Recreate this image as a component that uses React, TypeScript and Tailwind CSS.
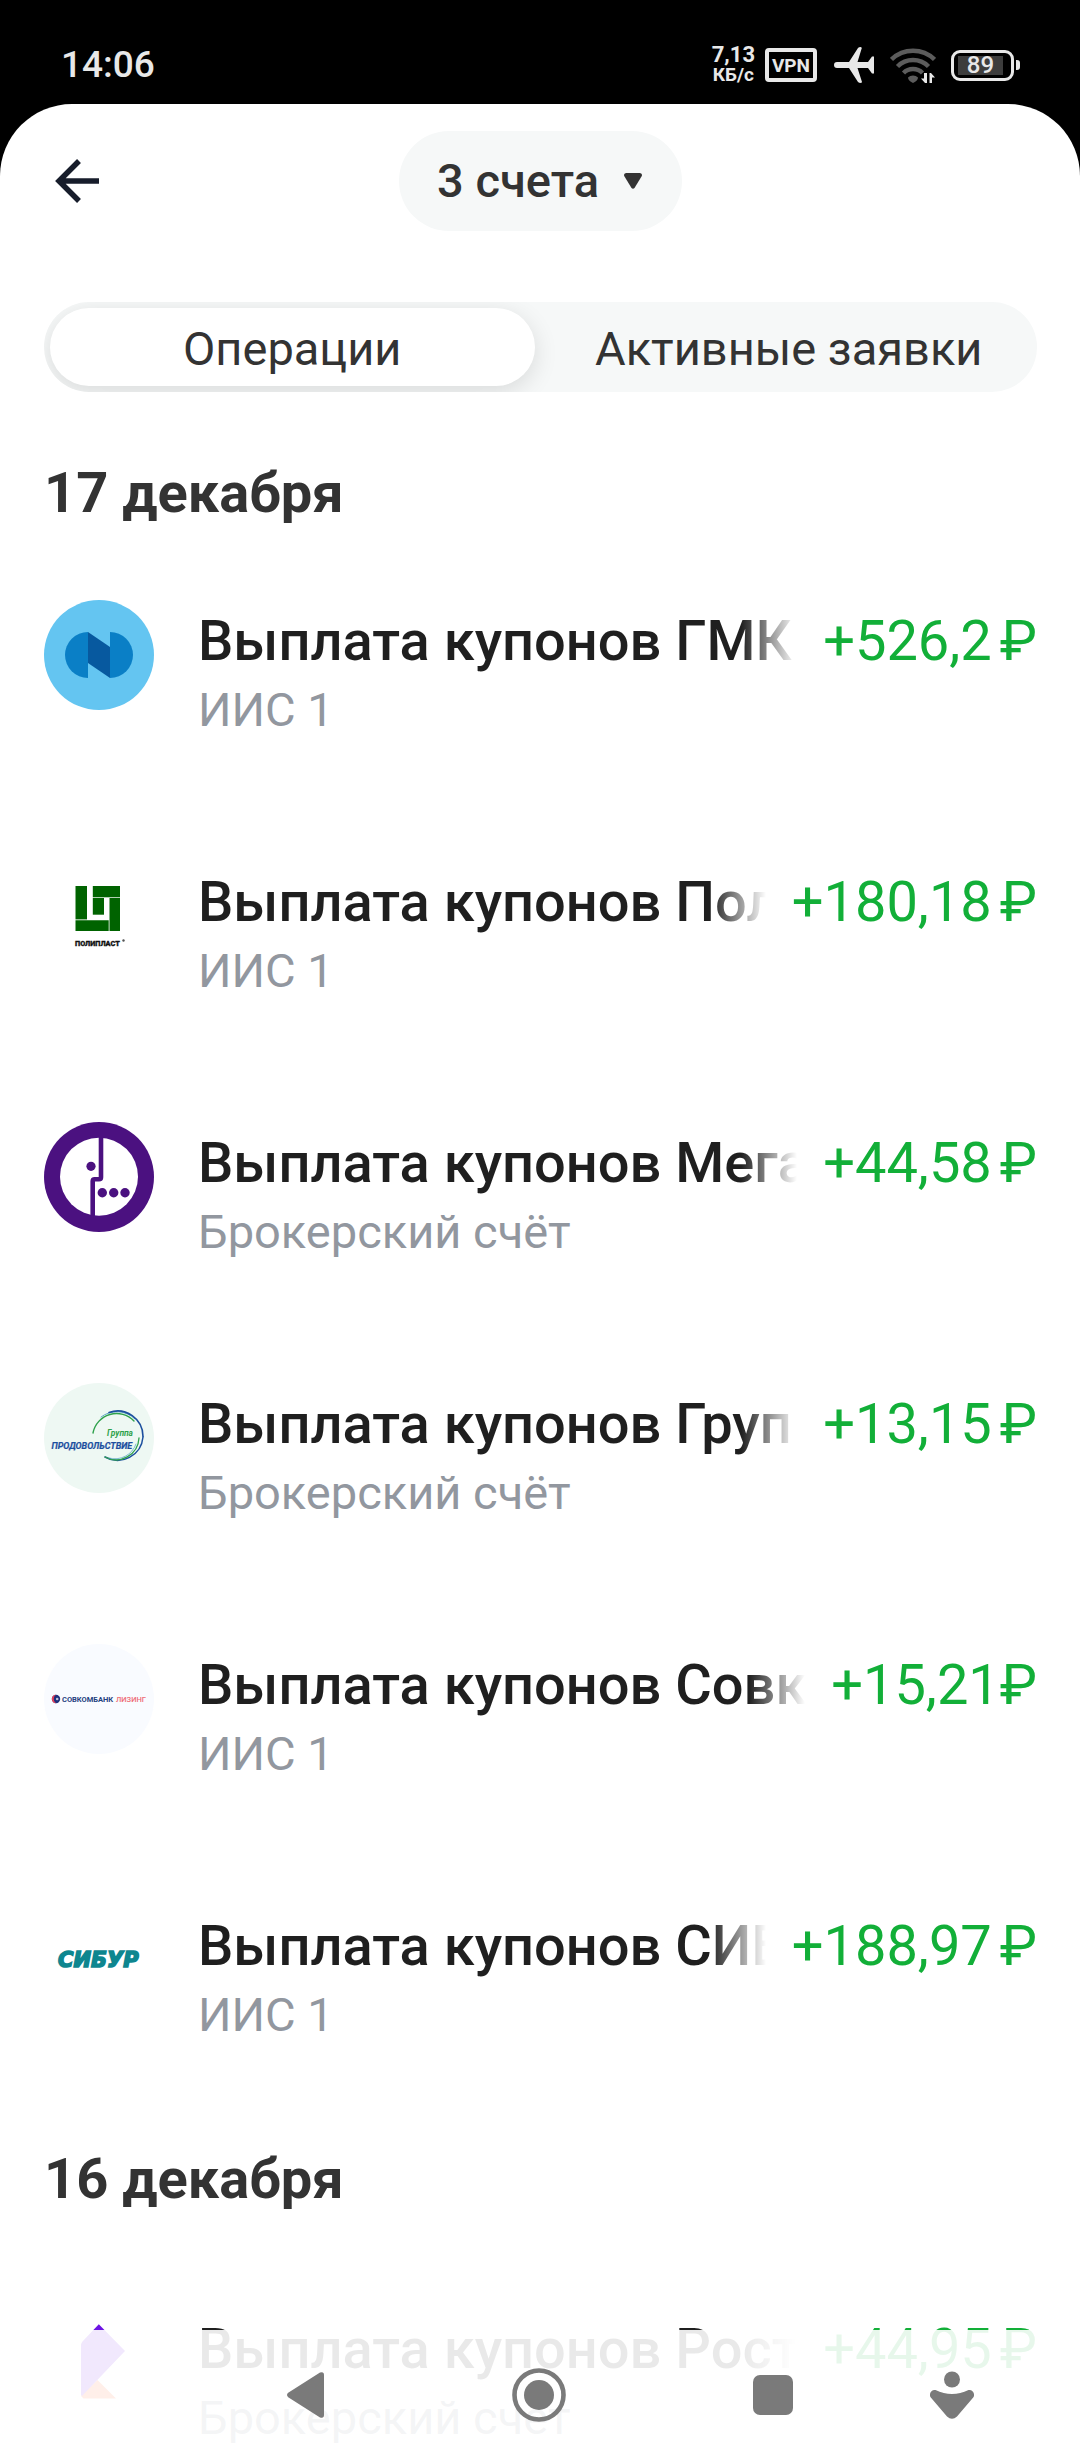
import { useState } from "react";
import type { ReactNode } from "react";

interface Operation {
  id: string;
  title: string;
  account: string;
  amount: string;
  currencyClass?: string;
  logo: ReactNode;
}

interface OperationGroup {
  date: string;
  headerClass: string;
  operations: Operation[];
}

function NornickelLogo() {
  return (
    <svg className="size-[110px] shrink-0" viewBox="0 0 110 110" aria-hidden>
      <circle cx="55" cy="55" r="55" fill="#64c5f1" />
      <path d="M44 32a23 23 0 0 0 0 46z" fill="#0a7fc6" />
      <path d="M66 32a23 23 0 0 1 0 46z" fill="#0a7fc6" />
      <path d="M44 32l22 15v31l-22-15z" fill="#07599f" />
    </svg>
  );
}

function PoliplastLogo() {
  return (
    <svg className="size-[110px] shrink-0" viewBox="0 0 110 110" aria-hidden>
      <g fill="#006300">
        <path d="M31.5 25H43v33.4H31.5z" />
        <path d="M31.5 59.2h33.2V70H31.5z" />
        <path d="M65.5 37H76v33H65.5z" />
        <path d="M48.8 25H76v11.3H48.8z" />
        <path d="M48.8 37H60v16.7H48.8z" />
      </g>
      <text
        x="31"
        y="84.5"
        fontSize="7.3"
        fontWeight="900"
        fill="#111"
        stroke="#111"
        strokeWidth="0.3"
        fontFamily="Roboto, sans-serif"
      >
        ПОЛИПЛАСТ
      </text>
      <circle cx="79.5" cy="79.5" r="1.2" fill="#555" />
    </svg>
  );
}

function MegafonLogo() {
  return (
    <svg className="size-[110px] shrink-0" viewBox="0 0 110 110" aria-hidden>
      <circle cx="55" cy="55" r="55" fill="#4b1180" />
      <circle cx="55" cy="54.7" r="39" fill="#fff" />
      <path
        d="M57 14v41.3q0 2-2 2h-4.3q-2 0-2 2V95"
        fill="none"
        stroke="#4b1180"
        strokeWidth="4.6"
      />
      <g fill="#4b1180">
        <circle cx="47" cy="44.3" r="4.6" />
        <circle cx="58.3" cy="70.7" r="4.7" />
        <circle cx="69.7" cy="70.7" r="4.7" />
        <circle cx="81" cy="70.7" r="4.7" />
      </g>
    </svg>
  );
}

function ProdovolstvieLogo() {
  return (
    <svg className="size-[110px] shrink-0" viewBox="0 0 110 110" aria-hidden>
      <circle cx="55" cy="55" r="55" fill="#eef8f3" />
      <g fill="none" strokeLinecap="round">
        <path d="M49 50a24 24 0 0 1 41-12" stroke="#2fa24c" strokeWidth="1.4" />
        <path d="M57 34a26 26 0 0 1 34 2" stroke="#4f9fc0" strokeWidth="0.9" />
        <path d="M65 29.5a25.5 25.5 0 0 1 34 24" stroke="#1c4f9e" strokeWidth="1.6" />
        <path d="M99 54a25.5 25.5 0 0 1-38 20" stroke="#1c4f9e" strokeWidth="1.5" />
        <path d="M95 55a23 23 0 0 1-34 19" stroke="#2fa24c" strokeWidth="1.3" />
        <path d="M92 61a22 22 0 0 1-27 14" stroke="#4f9fc0" strokeWidth="0.7" />
      </g>
      <g fontFamily="Roboto, sans-serif" fontWeight="700" fontStyle="italic">
        <text x="63" y="53" fontSize="8.4" fill="#2fa24c">
          Группа
        </text>
        <text x="7.5" y="65.5" fontSize="9" fill="#1c4f9e" stroke="#1c4f9e" strokeWidth="0.2">
          ПРОДОВОЛЬСТВИЕ
        </text>
      </g>
    </svg>
  );
}

function SovcombankLogo() {
  return (
    <svg className="size-[110px] shrink-0" viewBox="0 0 110 110" aria-hidden>
      <circle cx="55" cy="55" r="55" fill="#f9fbff" />
      <circle cx="12" cy="55" r="4.2" fill="#1d2f7c" />
      <path d="M12 50.8a4.2 4.2 0 0 0 0 8.4a5 5 0 0 1 0-8.4z" fill="#e4405a" />
      <circle cx="13.2" cy="55" r="1.3" fill="#fff" opacity="0.7" />
      <g fontFamily="Roboto, sans-serif" fontSize="7.5">
        <text x="18" y="57.7" fontWeight="700" fill="#24417f">
          СОВКОМБАНК
        </text>
        <text x="72" y="57.7" fontWeight="500" fill="#ee6a74">
          ЛИЗИНГ
        </text>
      </g>
    </svg>
  );
}

function SiburLogo() {
  return (
    <svg className="size-[110px] shrink-0" viewBox="0 0 110 110" aria-hidden>
      <text
        x="14"
        y="62"
        fontSize="21"
        fontWeight="700"
        fontStyle="italic"
        fill="#0e868f"
        stroke="#0e868f"
        strokeWidth="1.6"
        fontFamily="'DejaVu Sans', sans-serif"
      >
        СИБУР
      </text>
    </svg>
  );
}

function RostelecomLogo() {
  return (
    <svg className="size-[110px] shrink-0" viewBox="0 0 110 110" aria-hidden>
      <path d="M53.5 72L72 90.5H39.5L37 88z" fill="#ff5a1f" />
      <path d="M54.8 16.3L81 43 38 88l-1-1V37q0-2 1.5-3.5z" fill="#6d14e4" />
    </svg>
  );
}

const GROUPS: OperationGroup[] = [
  {
    date: "17 декабря",
    headerClass: "h-[98px]",
    operations: [
      { id: "gmk", title: "Выплата купонов ГМК", account: "ИИС 1", amount: "+526,2", logo: <NornickelLogo /> },
      { id: "pol", title: "Выплата купонов Пол", account: "ИИС 1", amount: "+180,18", logo: <PoliplastLogo /> },
      { id: "mega", title: "Выплата купонов Мега", account: "Брокерский счёт", amount: "+44,58", logo: <MegafonLogo /> },
      { id: "grup", title: "Выплата купонов Груп", account: "Брокерский счёт", amount: "+13,15", logo: <ProdovolstvieLogo /> },
      {
        id: "sovk",
        title: "Выплата купонов Совк",
        account: "ИИС 1",
        amount: "+15,21",
        currencyClass: "ml-0",
        logo: <SovcombankLogo />,
      },
      { id: "sib", title: "Выплата купонов СИБ", account: "ИИС 1", amount: "+188,97", logo: <SiburLogo /> },
    ],
  },
  {
    date: "16 декабря",
    headerClass: "h-[142px]",
    operations: [
      { id: "rost", title: "Выплата купонов Рост", account: "Брокерский счёт", amount: "+44,95", logo: <RostelecomLogo /> },
    ],
  },
];

const TABS = ["Операции", "Активные заявки"];

function StatusBar() {
  return (
    <div className="flex h-[104px] shrink-0 items-center justify-between pt-[26px] pr-[60px] pl-[61px] text-[#e8e8e8]">
      <span className="text-[37px] leading-[44px] font-medium">14:06</span>
      <div className="flex items-center">
        <div className="flex flex-col text-center font-bold">
          <span className="text-[22px] leading-[20px]">7,13</span>
          <span className="text-[19px] leading-[20px]">КБ/с</span>
        </div>
        <span className="ml-[10px] flex h-[34px] w-[52px] items-center justify-center rounded-[4px] border-4 border-[#e8e8e8] text-[19px] leading-none font-bold">
          VPN
        </span>
        <svg className="ml-[17px] h-9 w-10" viewBox="0 0 40 36" fill="currentColor" aria-hidden>
          <path d="M3 15h12L24 1q.6-1 3-1l.8 1L23.5 15H34l4-5.5h2v17h-2L34 21H23.5l4.500 14-.8 1q-2.500 0-3.200-1L15 21H3a3 3 0 0 1 0-6z" />
        </svg>
        <svg className="ml-4 h-9 w-[46px]" viewBox="0 0 46 36" fill="none" aria-hidden>
          <g stroke="#5c5c5c" strokeWidth="4.5">
            <path d="M1.5 12.5a31 31 0 0 1 43 0" />
            <path d="M7.5 19.5a22 22 0 0 1 31 0" />
            <path d="M13.5 26a13.5 13.5 0 0 1 19 0" />
          </g>
          <path d="M18 30.5a7 7 0 0 1 10 0q0 3-5 5.5q-5-2.500-5-5.500z" fill="#5c5c5c" />
          <path d="M37 26v10h-2l-4-4.500h3V26zM39.500 36V26h1.500l4 4.500h-3V36z" fill="#e8e8e8" />
        </svg>
        <div className="ml-[15px] flex items-center gap-[2px]">
          <div className="flex h-[31px] w-[63px] rounded-[9px] border-[3px] border-[#e8e8e8] px-1 py-[3px]">
            <span className="flex w-[45px] items-center justify-center bg-[#3d3d3d] text-[24px] leading-none font-medium">
              89
            </span>
          </div>
          <span className="h-[10px] w-1 rounded-r-[3px] bg-[#e8e8e8]" />
        </div>
      </div>
    </div>
  );
}

function OperationRow({ operation }: { operation: Operation }) {
  return (
    <li className="flex h-[261px] items-start pt-[59px]">
      {operation.logo}
      <div className="mt-1.5 ml-11 min-w-0 flex-1">
        <div className="flex items-center gap-[26px]">
          <h3 className="min-w-0 flex-1 overflow-hidden text-[56px] leading-[70px] font-medium whitespace-nowrap text-[#1f1f1f] [mask-image:linear-gradient(to_right,#000_calc(100%-56px),transparent)]">
            {operation.title}
          </h3>
          <span className="shrink-0 text-[56px] leading-[70px] text-[#12af38]">
            {operation.amount}
            <span className={operation.currencyClass ?? "ml-2"}>₽</span>
          </span>
        </div>
        <p className="text-[47px] leading-[68px] text-[#92979f]">{operation.account}</p>
      </div>
    </li>
  );
}

function NavigationBar() {
  return (
    <nav
      aria-label="Системная навигация"
      className="absolute inset-x-0 bottom-0 grid h-[130px] grid-cols-[234fr_234fr_234fr_124fr] items-center bg-white/90 pr-[66px] pl-[188px] text-[#7a7a7a]"
    >
      <button type="button" aria-label="Назад" className="flex justify-center">
        <svg className="h-[46px] w-[37px]" viewBox="0 0 37 46" fill="currentColor" aria-hidden>
          <path d="M1.2 20.8L33 .6q4-1.4 4 2.4v40q0 3.8-4 2.4L1.2 25.2q-2.4-2.2 0-4.4z" />
        </svg>
      </button>
      <button type="button" aria-label="Домой" className="flex justify-center">
        <svg className="size-[54px]" viewBox="0 0 54 54" aria-hidden>
          <circle cx="27" cy="27" r="24.5" fill="none" stroke="currentColor" strokeWidth="4.6" />
          <circle cx="27" cy="27" r="15" fill="currentColor" />
        </svg>
      </button>
      <button type="button" aria-label="Недавние" className="flex justify-center">
        <span className="size-10 rounded-[7px] bg-current" />
      </button>
      <button type="button" aria-label="Специальные возможности" className="flex justify-center">
        <svg className="h-[48px] w-[44px]" viewBox="0 0 44 48" fill="currentColor" aria-hidden>
          <circle cx="22" cy="8.5" r="8" />
          <path d="M5.5 19Q22 27 38.5 19c4.5-.8 7 4.5 4.7 7.5L27 45.500q-5 4.500-10 0L.8 26.500C-1.500 23.500 1 18.200 5.500 19z" />
        </svg>
      </button>
    </nav>
  );
}

export default function App() {
  const [activeTab, setActiveTab] = useState(TABS[0]);

  return (
    <div className="relative flex h-screen flex-col overflow-hidden bg-black font-['Roboto',sans-serif]">
      <StatusBar />
      <main className="min-h-0 flex-1 overflow-y-auto rounded-t-[72px] bg-white pr-[43px] pl-11 [scrollbar-width:none]">
        <header className="grid grid-cols-[1fr_auto_1fr] items-center pt-[27px]">
          <button type="button" aria-label="Назад" className="ml-[11px] w-11">
            <svg className="size-11" viewBox="0 0 44 44" fill="none" stroke="#171d2b" strokeWidth="5.5" aria-hidden>
              <path d="M44 22H5M24 2L4 22l20 20" />
            </svg>
          </button>
          <button
            type="button"
            className="flex h-[100px] items-center gap-[25px] rounded-full bg-[#f6f8f8] pr-10 pl-[38px] text-[47px] leading-[56px] font-medium text-[#333]"
          >
            3 счета
            <svg className="h-4 w-[18px]" viewBox="0 0 18 16" fill="currentColor" aria-hidden>
              <path d="M2 0h14q3 1 1.5 3.5L10.500 15q-1.500 1.500-3 0L.5 3.500Q-1 1 2 0z" />
            </svg>
          </button>
        </header>

        <div
          role="tablist"
          className="mt-[71px] grid h-[90px] grid-cols-2 gap-3 overflow-hidden rounded-full bg-[#f6f8f8] p-1.5"
        >
          {TABS.map((tab) => (
            <button
              key={tab}
              type="button"
              role="tab"
              aria-selected={tab === activeTab}
              onClick={() => setActiveTab(tab)}
              className={
                tab === activeTab
                  ? "rounded-full bg-white pt-1 text-[47px] leading-[56px] text-[#333] shadow-[0_6px_24px_rgba(0,0,0,0.12)]"
                  : "rounded-full pt-1 text-[47px] leading-[56px] text-[#333]"
              }
            >
              {tab}
            </button>
          ))}
        </div>

        <div className="mt-[51px]">
          {GROUPS.map((group) => (
            <section key={group.date}>
              <h2 className={`flex items-center pt-0.5 text-[56px] leading-[64px] font-bold text-[#333] ${group.headerClass}`}>
                {group.date}
              </h2>
              <ul>
                {group.operations.map((operation) => (
                  <OperationRow key={operation.id} operation={operation} />
                ))}
              </ul>
            </section>
          ))}
        </div>
      </main>
      <NavigationBar />
    </div>
  );
}
